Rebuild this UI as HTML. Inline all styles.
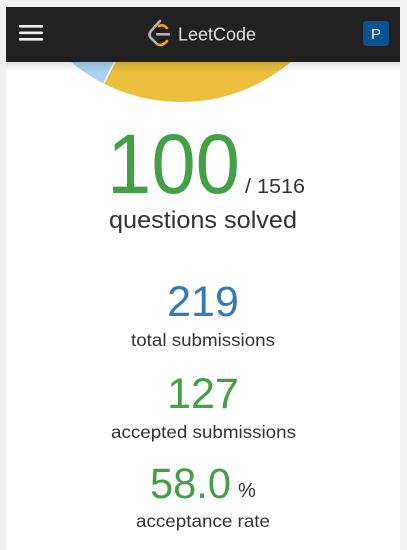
<!DOCTYPE html>
<html><head><meta charset="utf-8"><style>
html,body{margin:0;padding:0;background:#f2f2f2;width:407px;height:550px;overflow:hidden}
svg{display:block}
text{font-family:"Liberation Sans",Arial,sans-serif}
</style></head><body>
<svg width="407" height="550" viewBox="0 0 407 550">
<defs><clipPath id="c"><rect x="6" y="62" width="394" height="488"/></clipPath>
<linearGradient id="sh" x1="0" y1="0" x2="0" y2="1"><stop offset="0" stop-color="#000" stop-opacity="0.12"/><stop offset="1" stop-color="#000" stop-opacity="0"/></linearGradient></defs>
<rect x="0" y="0" width="407" height="550" fill="#f2f2f2"/>
<rect x="6" y="7" width="394" height="543" fill="#fff"/>
<g clip-path="url(#c)">
<circle cx="181" cy="-69" r="171" fill="#ebc03f"/>
<path d="M181,-69 L104,83 A171,171 0 0 1 20,-10 Z" fill="#a9d1f1"/>
<line x1="181" y1="-69" x2="104" y2="83" stroke="#fff" stroke-width="1.5"/>
<rect x="6" y="62" width="394" height="10" fill="url(#sh)"/>
</g>
<rect x="6" y="7" width="394" height="55" fill="#212121"/>
<g fill="#f0f0f0"><rect x="19" y="25" width="24" height="2.6" rx="1"/><rect x="19" y="31.5" width="24" height="2.6" rx="1"/><rect x="19" y="38" width="24" height="2.6" rx="1"/></g>
<path d="M160,21 L151,31 Q148,35 151,38 L157,44" fill="none" stroke="#b3b3b3" stroke-width="2.6" stroke-linecap="round"/>
<path d="M157,44 Q162,47 167,41" fill="none" stroke="#f89f1b" stroke-width="2.6" stroke-linecap="round"/>
<path d="M159,26 Q163,24 167,28" fill="none" stroke="#f89f1b" stroke-width="2.6" stroke-linecap="round"/>
<rect x="156" y="33" width="14" height="2.6" rx="1.3" fill="#b3b3b3"/>
<text x="178" y="40.5" font-size="18" fill="#e0e0e0" textLength="78" lengthAdjust="spacingAndGlyphs">LeetCode</text>
<rect x="363" y="21" width="26" height="25" rx="3" fill="#0a5393"/>
<text x="376" y="39" font-size="15" fill="#e8eef5" text-anchor="middle">P</text>
<text x="107" y="193" font-size="84" fill="#43a047" textLength="133" lengthAdjust="spacingAndGlyphs">100</text>
<text x="245" y="193" font-size="20" fill="#333" textLength="60" lengthAdjust="spacingAndGlyphs">/ 1516</text>
<text x="109" y="228" font-size="24.5" fill="#333" textLength="188" lengthAdjust="spacingAndGlyphs">questions solved</text>
<text x="203" y="316" font-size="43" fill="#337ab7" text-anchor="middle">219</text>
<text x="131" y="346" font-size="17.5" fill="#333" textLength="144" lengthAdjust="spacingAndGlyphs">total submissions</text>
<text x="203" y="408" font-size="43" fill="#43a047" text-anchor="middle">127</text>
<text x="111" y="438" font-size="17.5" fill="#333" textLength="185" lengthAdjust="spacingAndGlyphs">accepted submissions</text>
<text x="150" y="498" font-size="43" fill="#43a047" textLength="81" lengthAdjust="spacingAndGlyphs">58.0</text>
<text x="238" y="497" font-size="20" fill="#333">%</text>
<text x="136" y="527" font-size="17.5" fill="#333" textLength="134" lengthAdjust="spacingAndGlyphs">acceptance rate</text>
</svg>
</body></html>
